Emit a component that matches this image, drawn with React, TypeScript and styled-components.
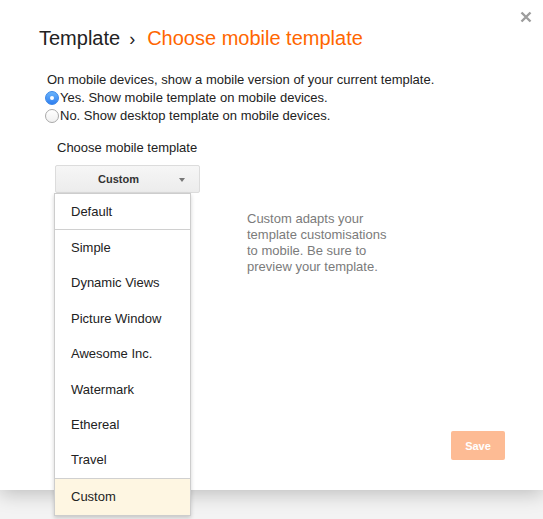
import React from "react";
import styled, { createGlobalStyle } from "styled-components";

const GlobalStyle = createGlobalStyle`
  html, body {
    margin: 0;
    padding: 0;
    background: #f3f3f3;
    font-family: "Liberation Sans", Arial, sans-serif;
    color: #222;
  }
`;

const Page = styled.div`
  min-height: 100vh;
  background: #f3f3f3;
`;

const Dialog = styled.div`
  position: relative;
  box-sizing: border-box;
  width: 543px;
  height: 490px;
  background: #fff;
  box-shadow: 0 4px 18px rgba(0, 0, 0, 0.22);
  display: flex;
  flex-direction: column;
  padding: 26px 38px 30px 39px;
`;

const CloseButton = styled.button`
  position: absolute;
  top: 11px;
  right: 11px;
  width: 12px;
  height: 12px;
  padding: 0;
  border: 0;
  background: none;
  cursor: pointer;
  display: flex;
`;

const Title = styled.h1`
  margin: 0;
  font-size: 20px;
  line-height: 24px;
  font-weight: normal;
  color: #222;
  display: flex;
  align-items: baseline;
`;

const Crumb = styled.span<{ $current?: boolean }>`
  color: ${(p) => (p.$current ? "#ff6600" : "#222")};
`;

const Chevron = styled.span`
  margin: 0 12px 0 9px;
  font-size: 18px;
`;

const Section = styled.div`
  margin: 20px 0 0 8px;
  font-size: 13px;
  line-height: 18px;
`;

const RadioRow = styled.label`
  display: flex;
  align-items: center;
  gap: 1px;
  margin-left: -2px;
`;

const RadioDot = styled.span<{ $on?: boolean }>`
  box-sizing: border-box;
  width: 14px;
  height: 14px;
  border-radius: 50%;
  display: flex;
  align-items: center;
  justify-content: center;
  background: ${(p) =>
    p.$on
      ? "linear-gradient(#6ab4fb, #2f7ff0)"
      : "linear-gradient(#ffffff, #f0f0f0)"};
  border: 1px solid ${(p) => (p.$on ? "#3a86e8" : "#a9a9a9")};
  &::after {
    content: "";
    display: ${(p) => (p.$on ? "block" : "none")};
    width: 4px;
    height: 4px;
    border-radius: 50%;
    background: #fff;
  }
`;

const FieldLabel = styled.div`
  margin: 14px 0 0 18px;
  font-size: 13px;
  line-height: 18px;
  color: #222;
`;

const PickerRow = styled.div`
  display: flex;
  align-items: flex-start;
  margin: 8px 0 0 16px;
`;

const Picker = styled.div`
  position: relative;
  width: 145px;
`;

const PickerButton = styled.div`
  box-sizing: border-box;
  height: 28px;
  border: 1px solid #dcdcdc;
  border-radius: 2px;
  background: linear-gradient(#f6f6f6, #ececec);
  display: flex;
  align-items: center;
  justify-content: center;
  padding-right: 18px;
  font-size: 11px;
  font-weight: bold;
  color: #333;
  position: relative;
`;

const Caret = styled.span`
  position: absolute;
  right: 14px;
  top: 12px;
  width: 0;
  height: 0;
  border-left: 3.5px solid transparent;
  border-right: 3.5px solid transparent;
  border-top: 4px solid #777;
`;

const Menu = styled.ul`
  position: absolute;
  top: 28px;
  left: -1px;
  width: 137px;
  box-sizing: border-box;
  margin: 0;
  padding: 0;
  list-style: none;
  background: #fff;
  border: 1px solid #cdcdcd;
  box-shadow: 0 2px 4px rgba(0, 0, 0, 0.18);
  z-index: 2;
`;

const Group = styled.div`
  & + & {
    border-top: 1px solid #d0d0d0;
  }
`;

const MenuItem = styled.li<{ $selected?: boolean; $h?: number }>`
  height: ${(p) => p.$h ?? 35.4}px;
  line-height: ${(p) => p.$h ?? 35.4}px;
  padding-left: 16px;
  font-size: 13px;
  color: #222;
  background: ${(p) => (p.$selected ? "#fef6e2" : "transparent")};
`;

const Hint = styled.p`
  margin: 46px 0 0 47px;
  width: 145px;
  font-size: 13px;
  line-height: 16px;
  color: #7b7b7b;
`;

const Footer = styled.div`
  margin-top: auto;
  display: flex;
  justify-content: flex-end;
`;

const SaveButton = styled.button`
  width: 54px;
  height: 29px;
  border: 0;
  border-radius: 2px;
  background: #fdbb94;
  color: #fff;
  font-family: "Liberation Sans", Arial, sans-serif;
  font-size: 11px;
  font-weight: bold;
  padding: 0;
`;

const templates = [
  "Simple",
  "Dynamic Views",
  "Picture Window",
  "Awesome Inc.",
  "Watermark",
  "Ethereal",
  "Travel",
];

export default function App() {
  return (
    <Page>
      <GlobalStyle />
      <Dialog>
        <CloseButton aria-label="Close">
          <svg width="12" height="12" viewBox="0 0 12 12">
            <path
              d="M1.5 1.5 L10.5 10.5 M10.5 1.5 L1.5 10.5"
              stroke="#9d9d9d"
              strokeWidth="2.4"
              strokeLinecap="butt"
            />
          </svg>
        </CloseButton>

        <Title>
          <Crumb>Template</Crumb>
          <Chevron>›</Chevron>
          <Crumb $current>Choose mobile template</Crumb>
        </Title>

        <Section>
          <div>On mobile devices, show a mobile version of your current template.</div>
          <RadioRow>
            <RadioDot $on />
            Yes. Show mobile template on mobile devices.
          </RadioRow>
          <RadioRow>
            <RadioDot />
            No. Show desktop template on mobile devices.
          </RadioRow>
        </Section>

        <FieldLabel>Choose mobile template</FieldLabel>

        <PickerRow>
          <Picker>
            <PickerButton>
              Custom
              <Caret />
            </PickerButton>
            <Menu>
              <Group>
                <MenuItem $h={35}>Default</MenuItem>
              </Group>
              <Group>
                {templates.map((t) => (
                  <MenuItem key={t}>{t}</MenuItem>
                ))}
              </Group>
              <Group>
                <MenuItem $selected $h={36}>Custom</MenuItem>
              </Group>
            </Menu>
          </Picker>
          <Hint>
            Custom adapts your template customisations to mobile. Be sure to
            preview your template.
          </Hint>
        </PickerRow>

        <Footer>
          <SaveButton disabled>Save</SaveButton>
        </Footer>
      </Dialog>
    </Page>
  );
}
